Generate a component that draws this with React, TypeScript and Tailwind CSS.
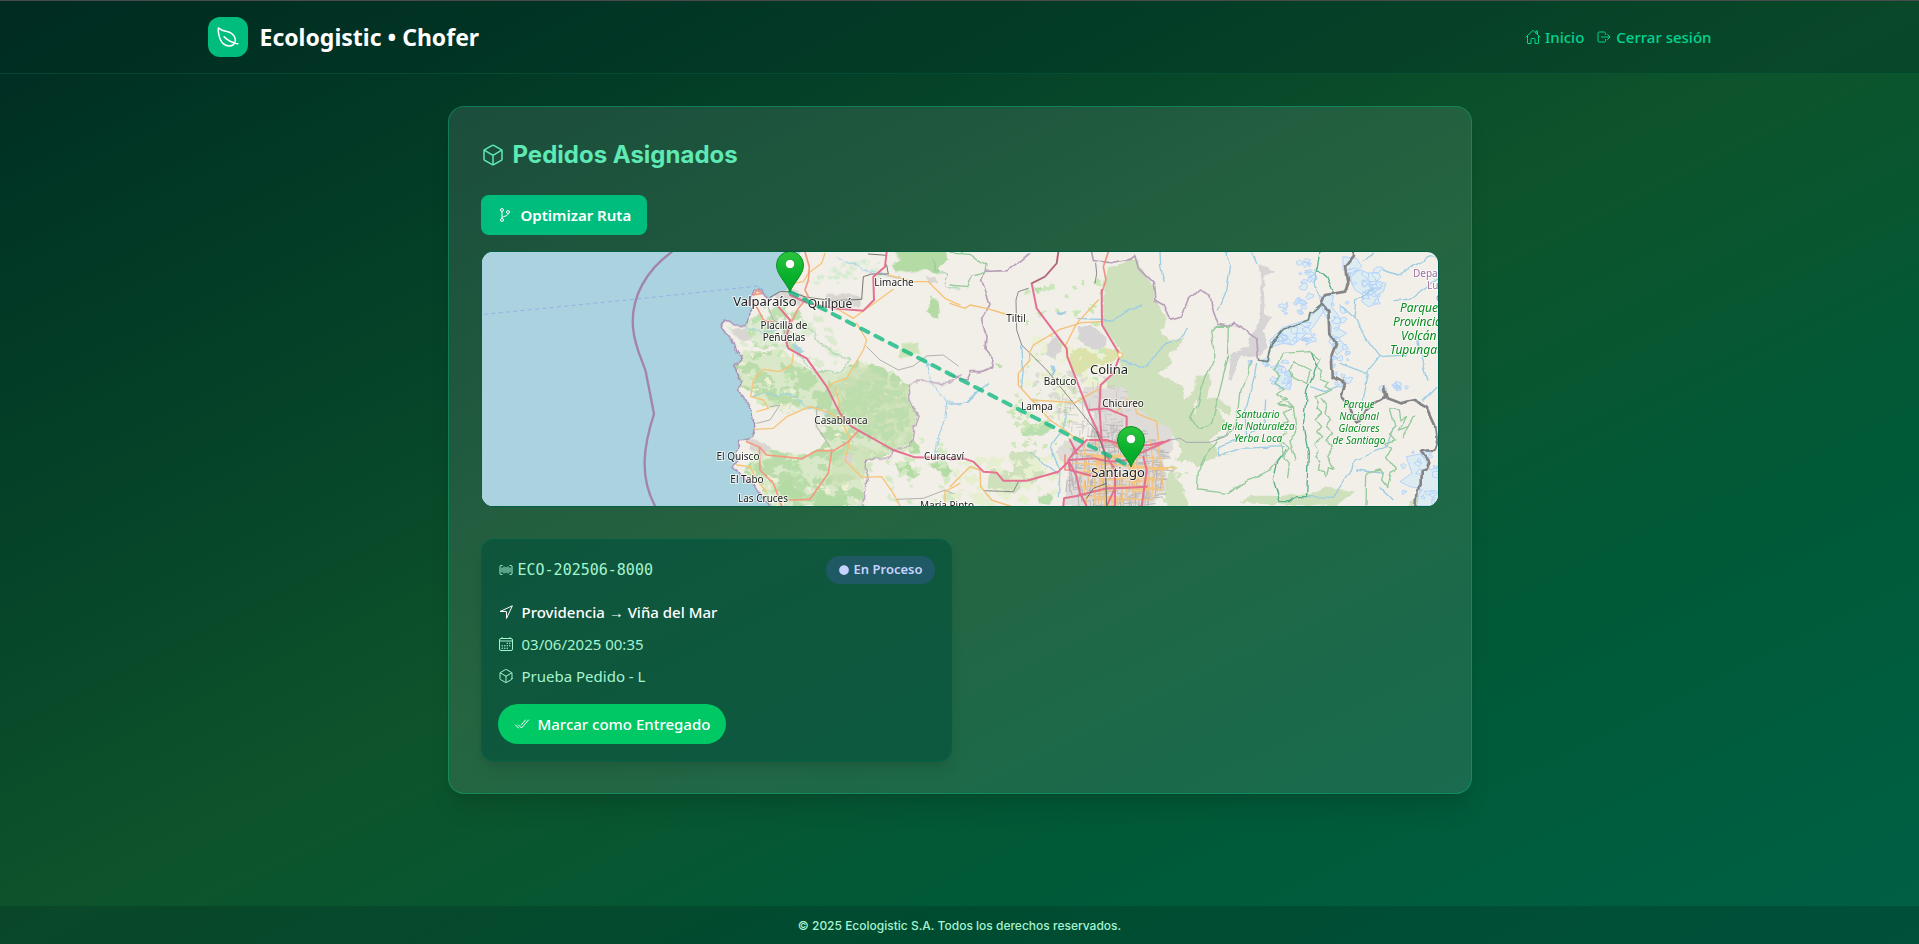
import React from 'react';
import {
  IoBarcodeOutline,
  IoCalendarOutline,
  IoCheckmarkDoneOutline,
  IoCubeOutline,
  IoEllipse,
  IoGitBranchOutline,
  IoHomeOutline,
  IoLeafOutline,
  IoLogOutOutline,
  IoNavigateOutline,
} from 'react-icons/io5';

type Label = {
  x: number;
  y: number;
  text: string;
  size?: number;
  kind?: 'town' | 'park' | 'region';
  anchor?: 'start' | 'middle';
};

const LABELS: Label[] = [
  { x: 283, y: 54, text: 'Valparaíso', size: 13 },
  { x: 348, y: 56, text: 'Quilpué', size: 12 },
  { x: 412, y: 34, text: 'Limache' },
  { x: 302, y: 77, text: 'Placilla de' },
  { x: 302, y: 89, text: 'Peñuelas' },
  { x: 359, y: 172, text: 'Casablanca' },
  { x: 256, y: 208, text: 'El Quisco' },
  { x: 265, y: 231, text: 'El Tabo' },
  { x: 281, y: 250, text: 'Las Cruces' },
  { x: 462, y: 208, text: 'Curacaví' },
  { x: 465, y: 257, text: 'María Pinto' },
  { x: 534, y: 70, text: 'Tiltil' },
  { x: 578, y: 133, text: 'Batuco' },
  { x: 627, y: 122, text: 'Colina', size: 13 },
  { x: 555, y: 158, text: 'Lampa' },
  { x: 641, y: 155, text: 'Chicureo' },
  { x: 636, y: 225, text: 'Santiago', size: 13 },
  { x: 776, y: 166, text: 'Santuario', kind: 'park' },
  { x: 776, y: 178, text: 'de la Naturaleza', kind: 'park' },
  { x: 776, y: 190, text: 'Yerba Loca', kind: 'park' },
  { x: 877, y: 156, text: 'Parque', kind: 'park' },
  { x: 877, y: 168, text: 'Nacional', kind: 'park' },
  { x: 877, y: 180, text: 'Glaciares', kind: 'park' },
  { x: 877, y: 192, text: 'de Santiago', kind: 'park' },
  { x: 918, y: 60, text: 'Parque', size: 12, kind: 'park', anchor: 'start' },
  { x: 911, y: 74, text: 'Provincial', size: 12, kind: 'park', anchor: 'start' },
  { x: 919, y: 88, text: 'Volcán', size: 12, kind: 'park', anchor: 'start' },
  { x: 908, y: 102, text: 'Tupungato', size: 12, kind: 'park', anchor: 'start' },
  { x: 931, y: 25, text: 'Departamento', kind: 'region', anchor: 'start' },
  { x: 945, y: 37, text: 'Luján', kind: 'region', anchor: 'start' },
  { x: 954, y: 49, text: 'de Cuyo', kind: 'region', anchor: 'start' },
];

const LABEL_COLOR = { town: '#222222', park: '#068c1c', region: '#9a6fa0' };

/** Seeded generator, so the terrain texture is the same on every render. */
function seeded(seed: number) {
  let s = seed;
  return () => {
    s = (s * 16807) % 2147483647;
    return s / 2147483647;
  };
}

/** Irregular patches spread over a rectangle, returned as one path. */
function patches(seed: number, count: number, x: number, y: number, w: number, h: number, size: number) {
  const rnd = seeded(seed);
  let d = '';
  for (let i = 0; i < count; i++) {
    const cx = x + rnd() * w;
    const cy = y + rnd() * h;
    const r = size * (0.3 + rnd());
    const turn = rnd() * 6;
    for (let k = 0; k < 9; k++) {
      const a = turn + (k / 9) * Math.PI * 2;
      const q = r * (0.35 + rnd() * 0.9);
      d += `${k ? 'L' : 'M'}${(cx + Math.cos(a) * q * 1.3).toFixed(0)} ${(cy + Math.sin(a) * q).toFixed(0)}`;
    }
    d += 'Z';
  }
  return d;
}

/** Short crossing street segments inside an ellipse. */
function streets(seed: number, count: number, cx: number, cy: number, rx: number, ry: number, len: number) {
  const rnd = seeded(seed);
  let d = '';
  for (let i = 0; i < count; i++) {
    const a = rnd() * Math.PI * 2;
    const q = Math.sqrt(rnd());
    const x = cx + Math.cos(a) * q * rx;
    const y = cy + Math.sin(a) * q * ry;
    const l = len * (0.4 + rnd());
    const t = (rnd() - 0.5) * 8;
    d += rnd() > 0.5 ? `M${x.toFixed(0)} ${y.toFixed(0)}l${l.toFixed(0)} ${t.toFixed(0)}` : `M${x.toFixed(0)} ${y.toFixed(0)}l${t.toFixed(0)} ${l.toFixed(0)}`;
  }
  return d;
}

function WestTerrain() {
  return (
    <g transform="translate(-2 -12) scale(0.33333)" fill="none" strokeLinejoin="round" strokeLinecap="round">
      <defs>
        <clipPath id="west-forest">
          <path d="M790 330L850 335 900 330 935 350 990 395 1085 398 1130 360 1180 375 1240 400 1290 440 1285 480 1318 530 1300 560 1290 610 1245 632 1200 655 1160 662 1155 710 1150 798 860 798 835 725 790 700 830 620 985 650 1040 600 1010 560 1000 505 910 520 830 490 820 460 780 440 765 380Z" />
        </clipPath>
        <clipPath id="west-hills">
          <path d="M810 160L1210 36 1440 36 1440 190 1300 150 1210 100 1150 200 1030 240 1110 350 1080 395 990 390 930 330 790 320 740 262 808 240Z" />
        </clipPath>
      </defs>
      <g filter="url(#rough)">
        <g clipPath="url(#west-forest)">
          <path fill="#d9e8c8" d="M760 320H1330V800H760Z" />
          <path fill="#badbaa" d={patches(11, 260, 760, 330, 560, 470, 20)} />
          <path fill="#f2efe9" opacity=".8" d={patches(23, 90, 780, 500, 260, 110, 16)} />
          <path fill="#eef0d5" d={patches(31, 140, 780, 340, 520, 460, 8)} />
          <path fill="#c3e8b4" d={patches(47, 200, 760, 330, 560, 470, 7)} />
        </g>
        <path fill="#cde0b6" opacity=".65" d="M1070 420L1130 375 1285 440 1285 485 1312 530 1295 600 1240 628 1150 570 1100 520 1045 450ZM1110 610L1230 640 1160 662 1150 710 1060 750 1050 690Z" />
        <path fill="#b9dcab" opacity=".8" d={patches(71, 90, 1100, 430, 180, 160, 13)} />
        <g clipPath="url(#west-hills)">
          <path fill="#bfe0b0" d={patches(5, 60, 800, 200, 180, 130, 13)} />
          <path fill="#dcebd0" d={patches(9, 60, 740, 230, 330, 160, 13)} />
          <path fill="#d5ecd0" d={patches(15, 60, 980, 50, 230, 80, 7)} />
        </g>
        <path fill="#b5dba5" d="M1228 20L1400 20 1405 60 1375 85 1385 102 1330 88 1290 102 1250 92 1232 75 1260 60ZM1350 170L1375 180 1380 215 1370 240 1340 215 1350 195ZM1245 670L1290 665 1300 690 1325 700 1300 712 1260 702ZM1350 670L1400 665 1420 690 1400 712 1370 690ZM1270 605L1300 600 1325 640 1290 642ZM1015 755L1060 770 1100 762 1090 798 1000 798ZM880 750L935 710 940 740 985 760 950 780Z" />
        <path fill="#cfe4b8" d="M1275 310L1315 305 1318 340 1290 350 1258 352 1260 325Z" />
        <path fill="#d3e9c3" d={patches(81, 45, 1160, 600, 280, 190, 10)} />
        <path fill="#d9d6d2" d="M1040 165L1110 158 1145 175 1140 200 1060 205 1030 180ZM880 160L945 150 985 170 955 195 900 190ZM750 270L800 262 812 300 780 300ZM800 600L830 600 875 625 850 640 815 625ZM1085 650L1115 645 1118 672 1090 670ZM1335 108L1365 112 1375 130 1350 130Z" />
        <path
          fill="#aad3df"
          d="M-60 -20H960L955 36 942 70 938 110 925 148 900 155 880 168 866 176 852 166 838 148 822 150 815 170 806 195 810 215 805 250 790 258 765 255 738 240 722 255 740 280 760 303 772 335 785 360 762 380 775 405 786 425 775 450 797 480 812 500 820 540 822 572 815 592 797 600 775 605 778 625 770 640 776 665 758 680 775 700 792 715 815 725 830 750 845 772 870 798 890 850H-60Z"
        />
        <path
          stroke="#a887ae"
          strokeWidth="4"
          d="M866 176L852 166 838 148 822 150 815 170 806 195 810 215 805 250 790 258 765 255 738 240 722 255 740 280 760 303 772 335 785 360 762 380 775 405 786 425 775 450 797 480 812 500 820 540 822 572 815 592 797 600 775 605 778 625 770 640 776 665 758 680 775 700 792 715 815 725 830 750 845 772 870 798"
        />
        <g stroke="#b9a0ba" strokeWidth="4">
          <path d="M1440 408L1415 420 1385 434 1350 422 1310 424 1288 440 1290 480 1300 505 1318 530 1305 560 1300 600 1285 618 1240 630 1225 655 1160 660 1158 690 1165 715 1155 760 1150 798" />
        </g>
        <g stroke="#96cbe6" strokeWidth="3">
          <path d="M820 470L850 460 885 465 905 462 935 462 965 488 1000 502 1025 510 1050 528M1070 50L1095 70 1130 72 1150 90 1185 92 1220 108 1260 110M1338 350L1345 385 1352 420 1375 455 1400 485 1395 530 1385 570 1370 610 1362 645M1400 485L1440 494M800 262L840 275 890 272" />
          <path fill="#aad3df" stroke="none" d="M935 310L960 318 975 335 955 340 945 332Z" />
        </g>
        <g stroke="#8fcb9b" strokeWidth="3">
          <path d="M950 340L990 385 1010 395 1085 395 1115 358 1060 340 1015 305 1005 280 985 262 965 262M1360 60L1365 90 1395 100 1400 140 1440 145" />
        </g>
      </g>
      <g stroke="#b3b0ae" strokeWidth="3">
        <path d="M1160 320L1200 360 1255 390 1300 378 1340 348 1390 345 1435 378M1010 505L1010 560 1050 620M830 550L870 540 900 495 870 500M860 190L880 240 910 255 920 320M1250 778L1330 775 1395 750 1440 770" />
        <path stroke="#77716d" d="M870 172L900 155 930 155 980 172 1060 182 1145 178 1150 110 1175 102 1225 102 1220 75M1165 42L1220 46" />
      </g>
      <g stroke="#f8c375" strokeWidth="4">
        <path d="M940 340L935 375 900 395 850 388 820 420 812 470 850 480 865 505 830 515M1130 250L1160 300 1150 330 1100 415 1060 428 1042 442M825 568L880 565 920 530 990 500 1040 515 1085 540 1110 600 1095 660 1145 712 1205 710 1240 760 1260 798M1225 105L1300 125 1345 125 1395 175 1440 195M1070 205L1120 235 1240 148M770 675L810 680 830 720 860 755M1065 440L1078 490 1080 530M940 130L970 125 985 100 1025 70 1035 40M1440 730L1395 755 1395 798" />
      </g>
      <g stroke="#f49a80" strokeWidth="5">
        <path d="M975 36L988 80 985 120 975 150 985 170 955 205 935 245M820 185L835 210 850 240 880 246M800 605L840 622 860 645 965 656 1010 632 1060 632 1105 605 1135 572M1055 635L1045 700 990 778 930 780M838 625L840 690 880 730 905 798M820 165L845 160 832 150 820 166" />
      </g>
      <g stroke="#e4718f" strokeWidth="6">
        <path d="M895 200L930 240 918 300 925 325 980 355 1040 440 1080 520 1115 560 1240 630 1305 652 1440 655M1060 205L1150 212 1182 180 1180 110 1215 80 1220 36M930 165L985 190 1060 205" />
      </g>
      <path stroke="#a283aa" strokeWidth="7" d="M575 36C500 90 452 170 459 262C464 330 500 385 499 405L510 460 522 522C490 620 478 710 525 798" />
      <path stroke="#8f9df0" strokeWidth="2" strokeDasharray="12 10" strokeLinecap="butt" d="M12 223L480 176 835 138 856 156" />
    </g>
  );
}

function EastTerrain() {
  return (
    <g transform="translate(468 -12) scale(0.33333)" fill="none" strokeLinejoin="round" strokeLinecap="round">
      <defs>
        <clipPath id="east-north">
          <path d="M200 130L460 110 490 260 500 340 450 480 350 560 210 480 240 320Z" />
        </clipPath>
      </defs>
      <g filter="url(#rough)">
        <path
          fill="#cfe0bc"
          d="M475 80L510 70 560 56 575 90 610 140 615 180 655 235 630 270 660 300 700 290 680 330 655 340 670 370 620 400 670 420 700 450 695 480 730 450 745 405 780 400 785 430 770 480 800 470 840 500 835 550 780 600 930 620 800 650 740 680 700 640 650 560 600 540 560 505 530 500 520 470 480 450 450 430 510 390 515 340 460 260 458 160ZM660 690L690 730 715 798 650 798 640 740ZM870 790L900 768 1060 765 1140 740 1215 755 1160 798ZM180 640L260 630 250 690 295 690 250 735 150 770 110 740 120 690 190 690ZM1370 798L1400 770 1460 798Z"
        />
        <path fill="#cfe0bc" d={patches(113, 40, 640, 640, 70, 160, 10)} />
        <path fill="#f2efe9" d="M800 500L850 540 960 470 980 620 930 640 810 640 780 605 830 550ZM735 470L745 500 730 530Z" />
        <path fill="#dce2a9" d="M355 335L440 322 510 330 500 355 470 375 410 385 400 420 370 400 355 365Z" />
        <g clipPath="url(#east-north)">
          <path fill="#c8e8b8" d={patches(13, 90, 200, 120, 300, 440, 9)} />
          <path fill="#ecf1d3" d={patches(19, 80, 200, 300, 280, 260, 13)} />
          <path fill="#dddbd6" d={patches(29, 50, 250, 400, 250, 150, 10)} />
        </g>
        <path fill="#d6d4d4" d="M380 262L420 258 470 290 468 320 430 328 385 300ZM290 310L320 290 335 330 305 358 288 345ZM925 75L950 80 970 100 940 110 945 225 965 235 940 270 955 320 920 350 870 345 845 425 835 420 845 340 900 320 905 280 930 250 932 110Z" />
        <path fill="#dedbd8" d="M400 440L520 445 535 480 610 545 660 560 670 630 640 660 650 740 600 798 340 798 355 690 320 640 345 600 420 600 430 520 400 500Z" />
        <path fill="#badfae" d="M210 570L260 550 300 560 280 590 220 585ZM260 765L310 760 300 795 275 790ZM130 365L158 378 148 386ZM250 140L275 150 262 165Z" />
        <path fill="#e6efcf" d={patches(37, 60, 20, 640, 320, 150, 13)} />
        <path fill="#d0e6ba" d={patches(41, 45, 180, 450, 200, 170, 8)} />
        <path fill="#a5cfe0" d="M325 215L350 213 345 222 322 222ZM300 380L315 385 312 405 302 400Z" />
      </g>

      <path
        fill="#ddecf0"
        stroke="#b4d2f8"
        strokeWidth="3"
        d="M1200 85L1215 95 1235 90 1250 100 1270 98 1285 125 1308 130 1300 155 1280 165 1285 190 1255 200 1235 185 1240 165 1215 150 1205 130ZM960 300L1000 262 1070 240 1115 195 1130 200 1090 260 1060 290 1030 315 1000 310 965 320ZM1110 170L1150 165 1145 200 1175 240 1165 265 1190 280 1165 295 1190 320 1160 345 1140 300 1145 260 1120 215ZM975 380L1000 378 1005 405 1025 415 1020 450 990 440 965 430 985 410ZM1180 50L1220 55 1235 80 1205 110 1180 90ZM1370 650L1420 640 1440 690 1470 680 1470 798 1400 798 1410 745 1380 740 1350 725 1385 700Z"
      />
      <g fill="#dfeef2" stroke="#b4d2f8" strokeWidth="3">
        <path d={patches(83, 16, 1045, 55, 50, 140, 9)} />
        <path d={patches(89, 26, 1145, 180, 50, 260, 9)} />
        <path d={patches(97, 14, 970, 360, 50, 90, 8)} />
        <path d={patches(101, 16, 1360, 630, 100, 165, 11)} />
        <path d={patches(103, 8, 1300, 425, 80, 40, 8)} />
        <path d={patches(107, 16, 1205, 85, 90, 105, 12)} />
        <path d={patches(109, 7, 900, 360, 60, 15, 7)} />
        <path d={patches(127, 16, 990, 250, 110, 60, 11)} />
        <path d={patches(131, 8, 1000, 190, 70, 30, 7)} />
      </g>

      <g filter="url(#bends)">
        <g stroke="#9dcde3" strokeWidth="4">
          <path d="M630 36L632 80 642 125M830 36L842 75 830 150 805 210M905 36L920 70M380 235L490 240 540 205 575 198M510 358L575 385 620 350 635 318 680 305 712 268M890 590L885 520 915 400 920 370M950 480L945 550 890 590 805 620 810 645 870 625 1000 620M1100 80L1090 130 1110 170M1170 195L1215 235 1245 290 1290 350 1250 400 1170 370M1215 235L1220 180 1270 150M1335 185L1380 180 1460 120M1300 90L1345 105 1440 50 1465 55M1240 480L1255 400M1085 440L1125 455 1160 440M1075 770L1150 772 1200 700 1215 660 1310 620 1330 560M0 494L50 485 80 455 118 430M345 505L345 560 300 620 330 690 325 770M215 320L220 380 215 440M1290 350L1370 345M1460 440L1420 480M240 640L320 700M1300 700L1220 690M1330 780L1290 740M1240 60L1270 40M1400 300L1430 420" />
        </g>
        <g stroke="#b9a0ba" strokeWidth="5">
          <path d="M240 42L205 70 175 92 105 94 95 120 120 190 95 235 108 290 105 325 130 355 125 380 95 395 60 395 48 420 0 408M425 36L430 62 480 68 540 58 555 48 565 85 610 130 615 180 640 195 660 238 695 228 715 180 745 150 780 165 785 200 805 255 835 262 850 250 890 275 920 295 925 355" />
        </g>
        <g stroke="#96ca9c" strokeWidth="4">
          <path d="M0 36L60 40 108 75 105 98 65 108 50 140 0 135M782 275L795 350 760 420 745 490 722 535 745 568 785 550 800 490 832 360 835 262M782 275L800 262 835 262M905 362L895 400 870 450 865 500 850 570 800 600 778 630 745 700 742 750 790 755 835 760 880 730 960 690 1000 640 985 600M1000 340L1080 335 1110 360 1100 380 1118 395 1108 415 1135 425 1125 440 1145 450 1115 465 1095 470 1108 490 1100 505 1115 520 1095 540 1112 560 1100 575 1115 590 1095 610 1108 630 1095 650 1110 665 1105 690 1120 695 1130 712 1135 680 1150 685 1130 650 1150 620 1128 600 1150 580 1130 560 1145 540 1125 520 1130 500 1115 480M975 390L1000 340M975 390L990 410 975 430 1000 445 980 460 1010 480 985 495 1030 500 1000 515 1015 540 985 560 1010 580 985 600 1020 625 1000 650 1015 670 1010 710M1320 505L1335 560 1318 580 1335 600 1300 610 1325 625 1310 650 1340 690 1320 700 1310 740 1295 720 1300 700 1290 690 1250 700 1248 798M1320 505L1345 510 1350 540 1370 530 1345 570 1375 560 1360 590 1395 525M1030 365L1080 390 1070 430 1030 410 1020 390 1030 365M1000 480L1030 500 1040 580 1020 600 1035 660" />
        </g>
        <g stroke="#57b08b" strokeWidth="4">
          <path d="M1110 36L1100 90 1130 110 1148 150M1085 340L1100 380 1070 450 1060 560 1075 640 1070 770 1040 770 1020 785 990 785 970 720 985 660 1010 630" />
        </g>
        <path
          stroke="#858487"
          strokeWidth="8"
          d="M1210 20L1212 50 1188 80 1195 130 1185 155 1125 165 1115 190 1135 215 1138 280 1158 310 1145 345 1148 410 1185 430 1175 470 1195 490 1205 520 1215 545 1235 535 1250 505 1305 470 1302 440 1310 475 1350 490 1395 480 1430 500 1455 555 1460 600 1450 630 1415 633 1438 665 1430 685 1415 690 1415 735 1400 750 1395 815"
        />
        <path d="M925 360L950 365 965 310 1000 268 1075 240 1080 220 1115 192" stroke="#6f8683" strokeWidth="5" />
      </g>

      <path stroke="#bbb7b7" strokeWidth="3" d={streets(51, 420, 495, 690, 150, 140, 24)} />
      <path stroke="#c2bfbf" strokeWidth="2" d={streets(61, 80, 430, 500, 110, 80, 20)} />
      <path stroke="#f5c57f" strokeWidth="4" d={streets(53, 60, 500, 710, 110, 100, 60)} />
      <path
        stroke="#f5c57f"
        strokeWidth="4"
        d="M380 640L500 650 640 655M370 670L510 675 640 690M390 705L500 708 630 720M385 740L500 738 640 750M410 770L600 780M400 610L415 700 410 790M440 610L450 700 445 790M505 640L520 798M545 600L555 700 550 790M600 600L612 690 605 780M625 620L640 745"
      />
      <g stroke="#8b8a8c" strokeWidth="3">
        <path stroke="#a5a9b0" d="M658 600L690 595 710 607 780 607 825 590 845 555" />
        <path d="M235 145L205 155 198 180 200 270 215 315 290 390 440 575 465 640 470 798M437 70L440 100 435 130" />
        <path d="M100 752L190 755 205 725" />
      </g>
      <g stroke="#f4c078" strokeWidth="4">
        <path d="M0 190L45 205 60 195 110 205 165 222 198 228M445 180L385 245 375 260 345 320M455 245L395 248 330 268 250 315 238 340 240 360 205 400 205 435 245 480 300 540 345 570 370 590 400 598M245 480L375 488 450 445M495 520L510 505 530 478 555 500 560 520 620 545 625 600M90 690L92 740 125 780 180 798M90 690L60 680 0 740" />
      </g>
      <g stroke="#ef947f" strokeWidth="5">
        <path d="M475 36L460 80 468 120 455 160M345 645L345 690 355 690M410 600L480 605 530 640" />
      </g>
      <g stroke="#e4718f" strokeWidth="6">
        <path d="M325 36L320 70 285 110 245 130 260 205 350 325 352 350 420 525 450 590 465 640 495 690 495 798M455 150L456 255 510 345 490 400 452 435 448 500 455 600M415 510L470 505 530 530 530 560M0 660L40 655 70 665 100 695 140 698 160 722 230 722 325 695 360 660 430 655 480 665 530 660 570 640 658 600M410 600L370 640 355 660 360 690 435 710M355 660L380 710 390 760 410 798M340 798L342 775 380 768 470 745 500 745 590 740M420 600L470 600 530 618 600 615 640 605M580 650L590 690 575 798M360 600L370 620 380 640M495 745L470 798" />
      </g>
      <circle cx="510" cy="345" r="7" stroke="#f4c078" strokeWidth="4" fill="#fff" />
      <path stroke="#77716d" strokeWidth="3" d="M325 36L320 70 285 110 245 130M440 575L465 640 470 798M470 730L430 745 410 775" />
    </g>
  );
}

function Pin({ x, y }: { x: number; y: number }) {
  return (
    <g transform={`translate(${x} ${y})`}>
      <path
        fill="url(#pin)"
        stroke="#0c8f24"
        strokeWidth="1"
        d="M0 0C-3 -9 -13.500 -17 -13.500 -27A13.500 13.500 0 0 1 13.500 -27C13.500 -17 3 -9 0 0Z"
      />
      <circle cy="-28" r="4.600" fill="#fff" stroke="#0c8f24" strokeWidth=".6" />
    </g>
  );
}

function RouteMap() {
  return (
    <svg
      className="block h-full w-full"
      viewBox="0 0 956 254"
      preserveAspectRatio="xMidYMid slice"
      role="img"
      aria-label="Mapa de la ruta"
    >
      <defs>
        <linearGradient id="pin" x1="0" y1="0" x2="0" y2="1">
          <stop offset="0" stopColor="#2dc53c" />
          <stop offset=".6" stopColor="#08b02c" />
          <stop offset="1" stopColor="#02a62a" />
        </linearGradient>
        <filter id="rough" colorInterpolationFilters="sRGB">
          <feTurbulence type="fractalNoise" baseFrequency=".035" numOctaves="3" seed="4" result="noise" />
          <feDisplacementMap in="SourceGraphic" in2="noise" scale="20" xChannelSelector="R" yChannelSelector="G" />
        </filter>
        <filter id="bends" colorInterpolationFilters="sRGB">
          <feTurbulence type="fractalNoise" baseFrequency=".03" numOctaves="1" seed="9" result="noise" />
          <feDisplacementMap in="SourceGraphic" in2="noise" scale="18" xChannelSelector="R" yChannelSelector="G" />
        </filter>
      </defs>
      <rect width="956" height="254" fill="#f2efe9" />
      <WestTerrain />
      <EastTerrain />
      <g strokeLinejoin="round">
        {LABELS.map((l) => {
          const kind = l.kind ?? 'town';
          return (
            <text
              key={l.text + l.x + l.y}
              x={l.x}
              y={l.y}
              className="font-['Noto_Sans',sans-serif]"
              fontSize={l.size ?? 10}
              fontStyle={kind === 'park' ? 'italic' : 'normal'}
              textAnchor={l.anchor ?? 'middle'}
              fill={LABEL_COLOR[kind]}
              stroke="#ffffff"
              strokeOpacity=".7"
              strokeWidth="2"
              paintOrder="stroke"
            >
              {l.text}
            </text>
          );
        })}
      </g>
      <path d="M308 40L649 215" stroke="#10b981" strokeOpacity=".78" strokeWidth="4" strokeLinecap="round" strokeDasharray="8 8" />
      <Pin x={308} y={40} />
      <Pin x={649} y={215} />
    </svg>
  );
}

function Header() {
  return (
    <header className="border-t border-b border-t-[#4a4a4a] border-b-emerald-700/30 bg-emerald-950/30">
      <div className="mx-auto flex max-w-[1536px] items-center justify-between px-4 py-4">
        <div className="flex items-center gap-3">
          <div className="flex size-10 items-center justify-center rounded-xl bg-emerald-500 text-white">
            <IoLeafOutline className="size-6" />
          </div>
          <span className="text-[23px] leading-8 font-bold text-white">Ecologistic • Chofer</span>
        </div>
        <nav className="flex items-center gap-3 text-[15px] leading-6 font-medium text-emerald-400">
          <a href="#inicio" className="flex items-center gap-1">
            <IoHomeOutline className="size-4" />
            Inicio
          </a>
          <a href="#salir" className="flex items-center gap-1">
            <IoLogOutOutline className="size-4" />
            Cerrar sesión
          </a>
        </nav>
      </div>
    </header>
  );
}

function OrderCard() {
  return (
    <article className="rounded-xl border border-emerald-800 bg-emerald-900/60 p-4 shadow-lg">
      <div className="mb-4 flex items-center justify-between">
        <span className="flex items-center gap-1 font-['DejaVu_Sans_Mono',monospace] text-[15px] leading-6 text-emerald-200">
          <IoBarcodeOutline className="size-4" />
          ECO-202506-8000
        </span>
        <span className="flex h-7 items-center gap-1 rounded-full bg-indigo-500/20 px-3 text-[13px] font-semibold text-indigo-200">
          <IoEllipse className="size-3" />
          En Proceso
        </span>
      </div>
      <div className="flex flex-col gap-2 text-[15px] leading-6 text-emerald-200">
        <p className="flex items-center gap-2 font-medium text-white">
          <IoNavigateOutline className="size-4" />
          Providencia → Viña del Mar
        </p>
        <p className="flex items-center gap-2">
          <IoCalendarOutline className="size-4" />
          03/06/2025 00:35
        </p>
        <p className="flex items-center gap-2">
          <IoCubeOutline className="size-4" />
          Prueba Pedido - L
        </p>
      </div>
      <button
        type="button"
        className="mt-4 flex h-10 items-center gap-2 rounded-full bg-[#00c864] px-4 text-[15px] font-medium text-white"
      >
        <IoCheckmarkDoneOutline className="size-4" />
        Marcar como Entregado
      </button>
    </article>
  );
}

export default function App() {
  return (
    <div className="flex min-h-screen flex-col bg-gradient-to-br from-emerald-950 via-green-900 to-emerald-800 font-['Noto_Sans',sans-serif]">
      <Header />
      <main className="flex-1 px-4 py-8">
        <section className="mx-auto max-w-5xl rounded-2xl border border-emerald-500/40 bg-white/10 p-8 shadow-xl">
          <h1 className="mb-6 flex items-center gap-2 font-['Inter',sans-serif] text-2xl font-bold text-emerald-300">
            <IoCubeOutline className="size-6" />
            Pedidos Asignados
          </h1>
          <button
            type="button"
            className="mb-4 flex h-10 items-center gap-2 rounded-lg bg-emerald-500 px-4 text-[15px] font-semibold text-white"
          >
            <IoGitBranchOutline className="size-4" />
            Optimizar Ruta
          </button>
          <div className="mb-8 h-64 overflow-hidden rounded-xl border border-emerald-800">
            <RouteMap />
          </div>
          <div className="grid grid-cols-1 gap-4 md:grid-cols-2">
            <OrderCard />
          </div>
        </section>
      </main>
      <footer className="bg-emerald-950/30 pt-3 pb-2.5 text-center font-['Inter',sans-serif] text-xs font-medium text-emerald-200">
        © 2025 Ecologistic S.A. Todos los derechos reservados.
      </footer>
    </div>
  );
}
